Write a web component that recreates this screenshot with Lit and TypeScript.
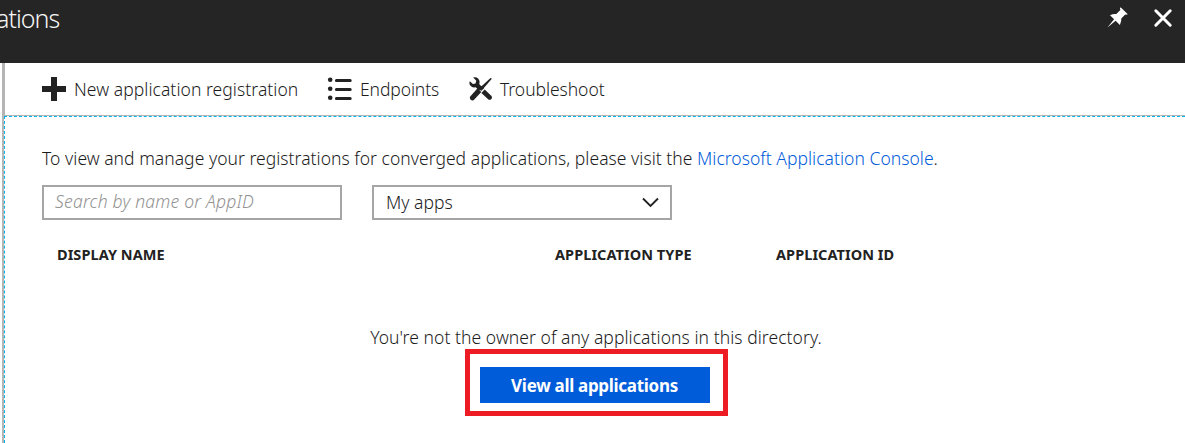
import { LitElement, html, css, svg } from "lit";
import { customElement } from "lit/decorators.js";

const plusIcon = svg`<svg class="icon" width="24" height="24" viewBox="0 0 24 24"><path d="M9 0h6v9h9v6h-9v9H9v-9H0V9h9z" fill="#222"/></svg>`;

const listIcon = svg`<svg class="icon" width="24" height="24" viewBox="0 0 24 24">
  <g fill="#222"><circle cx="2.2" cy="2.8" r="2.3"/><circle cx="2.2" cy="11.8" r="2.3"/><circle cx="2.2" cy="20.8" r="2.3"/></g>
  <path d="M8.4 3.4h13.8M8.4 12.4h13.8M8.4 21.4h13.8" stroke="#222" stroke-width="3" stroke-linecap="round"/></svg>`;

const toolsIcon = svg`<svg class="icon" width="24" height="24" viewBox="0 0 24 24">
  <path d="M4.200.5C7.200-.6 10.400 1.400 10.600 4.700Q10.600 6.200 10.200 7.100L13.400 10.500L10 13.500L6.700 10.300C3.700 11 .7 9.200.4 6.200Q.3 5 .8 4.200L3.900 7L6.500 6.500L7.300 3.700Z" fill="#222"/>
  <path d="M15.700 12.500L22.500 19.100C24 21.300 21.600 23.900 19.400 22.400L12.400 15.900Z" fill="#222"/>
  <path d="M21.500 .9Q22.800 .8 22.600 2.100L14.200 11.800L12 9.700Z" fill="#222"/>
  <path d="M8.600 11.300L12.300 14.900L4.800 23C2.800 24.500-.2 21.500 1.200 19.400Z" fill="#222"/>
  <path d="M10 11.500L12.500 9L14.900 11.400L12.100 14Z" fill="#222"/></svg>`;

const pinIcon = svg`<svg class="icon" width="22" height="22" viewBox="0 0 22 22">
  <path d="M13.600.2L20.800 7.300L19.100 7.800L18.200 7.400L14.300 11.600Q14.600 14.400 12.900 17.900L8.600 13.700L.4 20.600L7.100 12.200L3 8.200Q6.300 6.500 9.300 7L13.400 3.100L12.900 1.600Z" fill="#fff"/></svg>`;

const closeIcon = svg`<svg class="icon" width="18" height="18" viewBox="0 0 18 18"><path d="M1.800 1.800L16.200 16.200M16.200 1.800L1.800 16.200" stroke="#fff" stroke-width="3" stroke-linecap="round"/></svg>`;

const chevronIcon = svg`<svg class="icon" width="17" height="11" viewBox="0 0 17 11"><path d="M1 1.500L8.500 9L16 1.500" fill="none" stroke="#222" stroke-width="1.900"/></svg>`;

@customElement("app-root")
export class AppRoot extends LitElement {
  static styles = css`
    :host { display: block; width: 1185px; height: 443px; overflow: hidden; background: #fff; color: #1c1c1c;
      font: 350 17.5px/24px "Noto Sans", "Open Sans", sans-serif; letter-spacing: 0.03px; white-space: nowrap; }
    * { box-sizing: border-box; }
    .icon { display: block; flex: none; overflow: visible; }
    header { display: flex; height: 63px; background: #252525; padding-right: 13px; }
    h1 { margin: 0 auto 0 -4px; padding-top: 2px; font-size: 25px; line-height: 32px; font-weight: 300; color: #f6f6f6; letter-spacing: -1px; }
    .pin { padding-top: 7px; margin-right: 25px; }
    .close { padding-top: 9px; }
    .blade { margin-left: 2px; height: 380px; border-left: 2px solid #b5b5b5; }
    nav { display: flex; align-items: center; height: 53px; border-bottom: 1px solid #b5b5b5; border-left: 1px solid #b5b5b5; padding-left: 37px; }
    .command { display: flex; align-items: center; gap: 8px; }
    .new { width: 286px; letter-spacing: 0.06px; }
    .endpoints { width: 141px; gap: 8px; letter-spacing: -0.1px; }
    .troubleshoot { gap: 7px; letter-spacing: -0.05px; }
    .content { height: 327px; border-top: 1px dashed #00b4ea; border-left: 1px dashed #00b4ea; padding: 29px 0 0 37px; }
    p { margin: 0; }
    a { color: #015cda; text-decoration: none; }
    .filters { display: flex; gap: 30px; margin-top: 15px; }
    .field { display: flex; align-items: center; justify-content: space-between; width: 300px; height: 35px; border: 2px solid #a5a5a5; padding: 0 11px; }
    .search { color: #929292; font-style: italic; letter-spacing: 0.23px; padding-bottom: 3px; }
    .select { padding-left: 12px; }
    .select span { padding-bottom: 1px; }
    .columns { display: grid; grid-template-columns: 498px 221px 1fr; margin-top: 23px; padding-left: 15px; font-size: 14.5px; line-height: 22px; font-weight: 700; color: #222; letter-spacing: 0.06px; }
    .empty { display: flex; flex-direction: column; align-items: center; width: 1108px; margin-top: 60px; }
    .message { letter-spacing: 0.06px; }
    .highlight { width: 263px; height: 67px; border: 5px solid #ed1c24; padding: 13px 10px; }
    .action { display: block; width: 230px; height: 36px; border: 0; padding: 2px 0 0; background: #015cda; color: #fff; font: 700 17px/34px "Noto Sans", sans-serif; letter-spacing: -0.3px; }
  `;

  render() {
    return html`
      <header>
        <h1>ations</h1>
        <div class="pin">${pinIcon}</div>
        <div class="close">${closeIcon}</div>
      </header>
      <main class="blade">
        <nav>
          <div class="command new">${plusIcon}<span>New application registration</span></div>
          <div class="command endpoints">${listIcon}<span>Endpoints</span></div>
          <div class="command troubleshoot">${toolsIcon}<span>Troubleshoot</span></div>
        </nav>
        <section class="content">
          <p>To view and manage your registrations for converged applications, please visit the <a>Microsoft Application Console</a>.</p>
          <div class="filters">
            <div class="field search"><span>Search by name or AppID</span></div>
            <div class="field select"><span>My apps</span>${chevronIcon}</div>
          </div>
          <div class="columns"><span>DISPLAY NAME</span><span>APPLICATION TYPE</span><span>APPLICATION ID</span></div>
          <div class="empty">
            <p class="message">You're not the owner of any applications in this directory.</p>
            <div class="highlight"><button class="action">View all applications</button></div>
          </div>
        </section>
      </main>`;
  }
}
